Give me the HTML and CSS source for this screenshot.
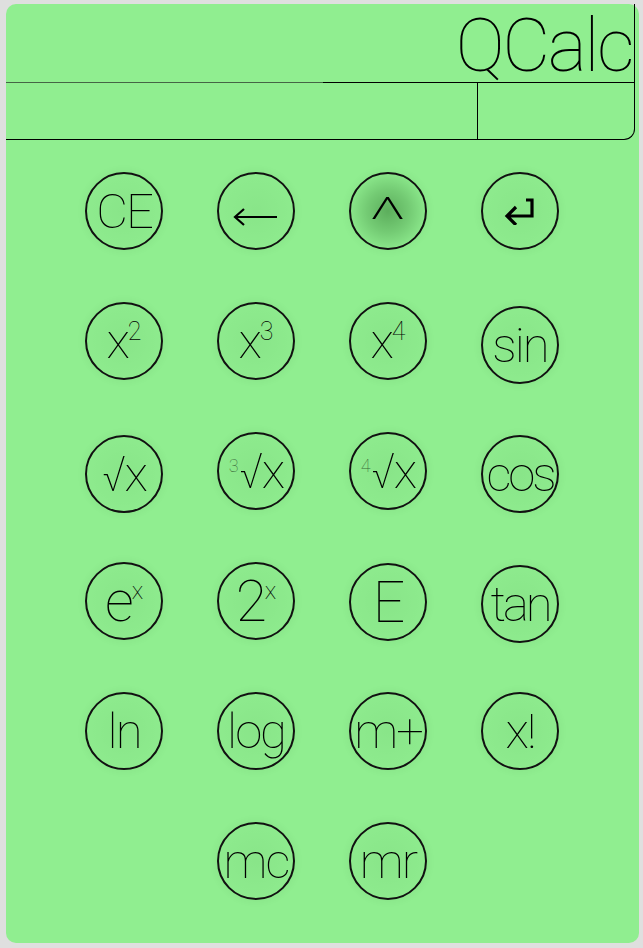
FILE: index.html
```html
<!DOCTYPE html>
<html lang="en">
<head>
<meta charset="utf-8">
<title>QCalc</title>
<link rel="stylesheet" href="styles.css">
</head>
<body>
<div class="panel">
  <header class="head">
    <div class="title"><span class="title-text">QCalc</span></div>
    <div class="display">
      <div class="screen"></div>
      <div class="mem"></div>
    </div>
  </header>
  <div class="keys">
    <button class="key"><span class="lbl">CE</span></button>
    <button class="key key-back" aria-label="backspace">
      <svg width="46" height="20" viewBox="0 0 46 20"><path d="M2 10H44M11 2L2 10L11 18" fill="none" stroke="#000" stroke-width="2.2"/></svg>
    </button>
    <button class="key key-pressed"><span class="lbl caret">^</span></button>
    <button class="key" aria-label="enter">
      <svg width="34" height="28" viewBox="0 0 34 28"><path d="M23 3H29V19H4M13 10L4 19L13 28" fill="none" stroke="#000" stroke-width="3.2"/></svg>
    </button>

    <button class="key"><span class="lbl">x<sup>2</sup></span></button>
    <button class="key"><span class="lbl">x<sup>3</sup></span></button>
    <button class="key"><span class="lbl">x<sup>4</sup></span></button>
    <button class="key key-low4"><span class="lbl">sin</span></button>

    <button class="key key-low3"><span class="lbl">√x</span></button>
    <button class="key"><span class="lbl"><sup class="idx">3</sup>√x</span></button>
    <button class="key"><span class="lbl"><sup class="idx">4</sup>√x</span></button>
    <button class="key key-low3 key-wide"><span class="lbl">cos</span></button>

    <button class="key key-big"><span class="lbl">e<sup class="supx">x</sup></span></button>
    <button class="key key-big"><span class="lbl">2<sup class="supx">x</sup></span></button>
    <button class="key key-big key-low1"><span class="lbl">E</span></button>
    <button class="key key-low3 key-wide"><span class="lbl">tan</span></button>

    <button class="key"><span class="lbl">ln</span></button>
    <button class="key"><span class="lbl">log</span></button>
    <button class="key"><span class="lbl">m+</span></button>
    <button class="key"><span class="lbl">x!</span></button>

    <button class="key key-col2"><span class="lbl">mc</span></button>
    <button class="key"><span class="lbl">mr</span></button>
  </div>
</div>
</body>
</html>
```

FILE: styles.css
```css
html, body {
  margin: 0;
  padding: 0;
  background: #dfdfdf;
}

body {
  padding: 4px 4px 5px 6px;
}

.panel {
  width: 633px;
  height: 939px;
  background: #90ee90;
  border-radius: 10px;
  font-family: Roboto, Inter, "Liberation Sans", sans-serif;
  font-weight: 100;
  color: #000;
}

.head {
  margin-right: 4px;
}

.title {
  height: 75px;
  padding-top: 3px;
  padding-right: 2px;
  border-right: 1px solid #000;
  text-align: right;
  font-size: 74px;
  line-height: 78px;
  white-space: nowrap;
}

.title-text {
  letter-spacing: -2.5px;
  padding-right: 2.5px;
  margin-right: -2.5px;
}

.display {
  display: flex;
  height: 56px;
  padding-top: 1px;
  background: linear-gradient(to right, #456545 317px, #000 317px) top left / 100% 1px no-repeat;
  border-bottom: 1px solid #000;
  border-right: 1px solid #000;
  border-bottom-right-radius: 11px;
}

.screen {
  width: 471px;
}

.mem {
  flex: 1;
  border-left: 1px solid #000;
}

.keys {
  display: grid;
  grid-template-columns: repeat(4, 132px);
  grid-auto-rows: 130px;
  padding-left: 52px;
  margin-top: 6px;
}

.key {
  justify-self: center;
  align-self: center;
  box-sizing: border-box;
  width: 78px;
  height: 78px;
  padding: 0;
  border: 2px solid #111;
  border-radius: 50%;
  background: radial-gradient(circle, rgba(0, 60, 0, 0.05) 0%, rgba(0, 60, 0, 0.02) 70%);
  box-shadow: 0 0 10px rgba(0, 50, 0, 0.07);
  font-family: inherit;
  font-weight: 100;
  font-size: 49px;
  color: #000;
  display: flex;
  align-items: center;
  justify-content: center;
  white-space: nowrap;
}

.lbl {
  display: block;
  line-height: 1;
  letter-spacing: -2px;
}

.lbl sup {
  font-size: 25px;
  line-height: 0;
  vertical-align: 18px;
  letter-spacing: 0;
}

.lbl .idx {
  font-size: 18px;
  vertical-align: 16px;
  margin-right: 1px;
  color: #3a6a3a;
}

.lbl .supx {
  font-size: 24px;
  vertical-align: 22px;
}

.key-big {
  font-size: 57px;
}

.key-wide .lbl {
  letter-spacing: -3px;
}

.key svg {
  display: block;
}

.key-back svg {
  margin-top: 12px;
}

.key-pressed {
  background: radial-gradient(circle, rgba(0, 60, 0, 0.36) 0%, rgba(0, 60, 0, 0.2) 40%, rgba(0, 60, 0, 0.03) 75%);
}

.caret {
  font-size: 62px;
  letter-spacing: 0;
  transform: translateY(9px) scaleX(1.55);
}

.key-low1 { margin-top: 2px; }
.key-low3 { margin-top: 6px; }
.key-low4 { margin-top: 8px; }

.key-col2 {
  grid-column: 2;
}
```
